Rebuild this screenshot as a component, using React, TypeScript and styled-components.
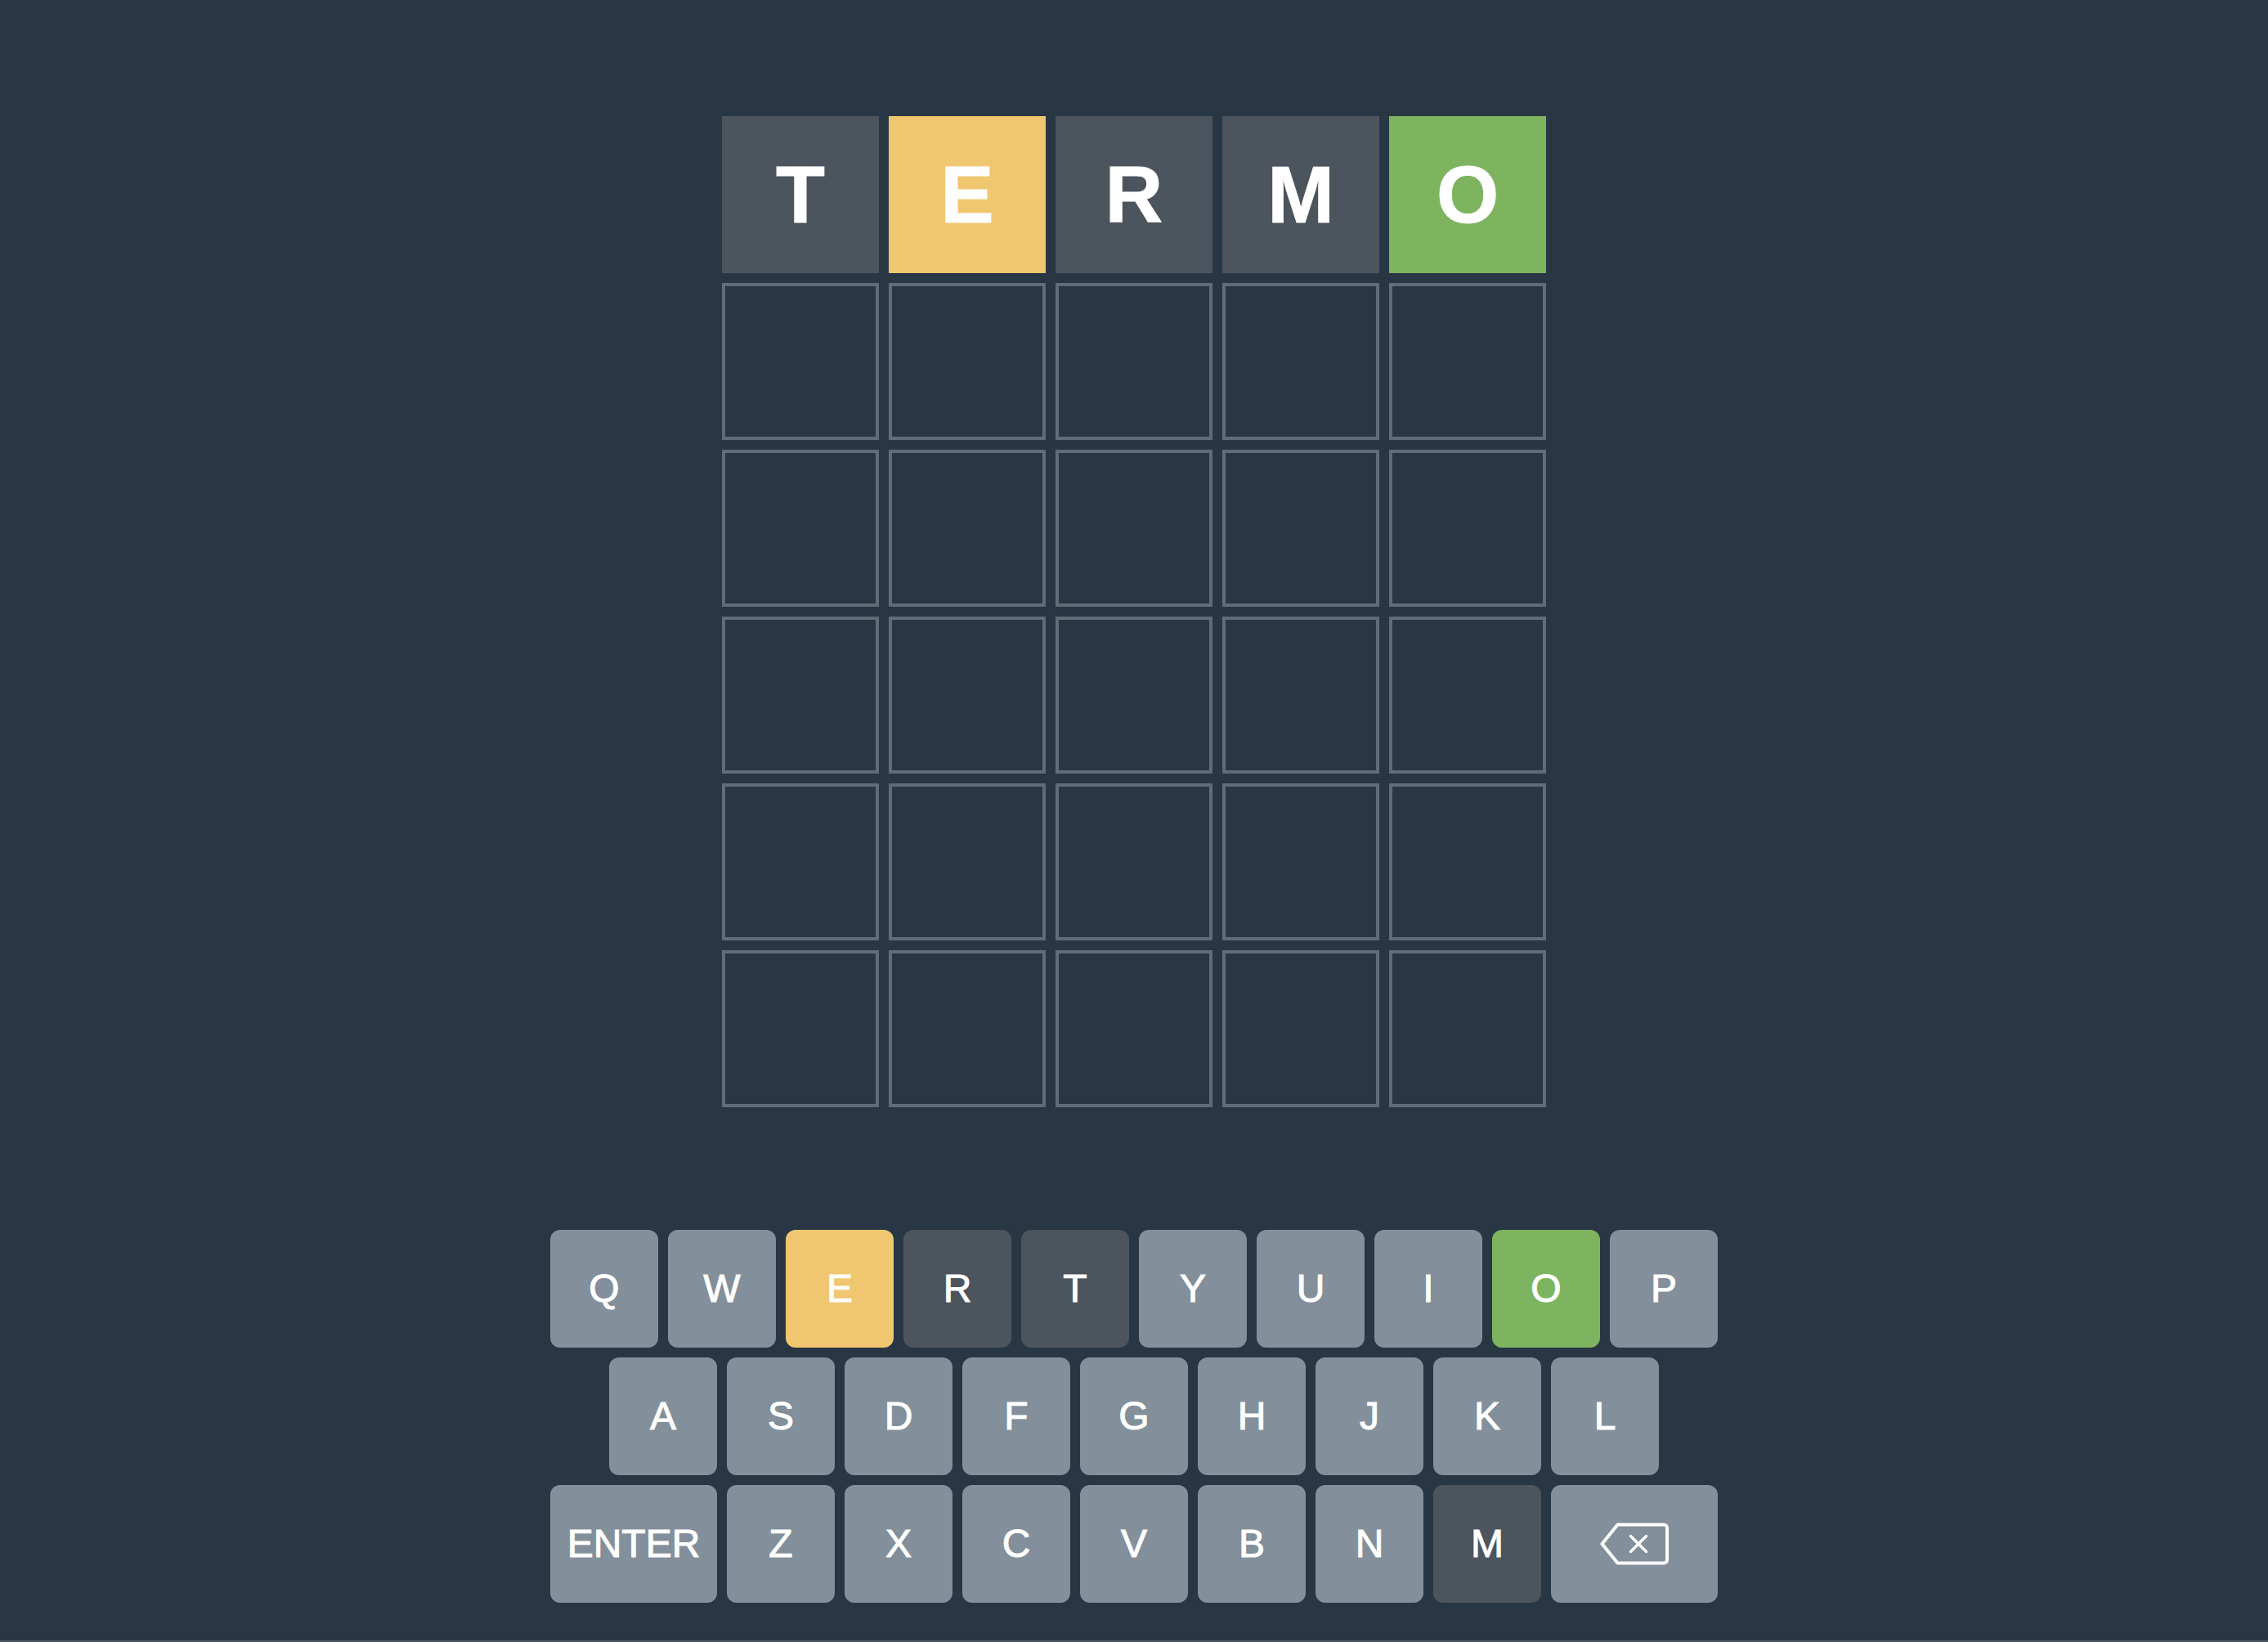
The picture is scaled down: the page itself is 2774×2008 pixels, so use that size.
import React from "react";
import styled, { createGlobalStyle } from "styled-components";

type Status = "idle" | "absent" | "present" | "correct";

const colors = {
  page: "#293643",
  outline: "#5f6d79",
  text: "#ffffff",
  idle: "#838f9a",
  absent: "#4c545e",
  present: "#f0c671",
  correct: "#7eb460",
};

const GlobalStyle = createGlobalStyle`
  *, *::before, *::after { box-sizing: border-box; }
  html, body { margin: 0; background: ${colors.page}; }
`;

const Page = styled.div`
  min-height: 100vh;
  padding: 142px 24px 46px;
  display: flex;
  flex-direction: column;
  align-items: center;
  gap: 150px;
  border-bottom: 2px solid #4f5c68;
  color: ${colors.text};
  font-family: "Liberation Sans", Arial, Helvetica, sans-serif;
`;

const Board = styled.main`
  display: grid;
  gap: 12px;
`;

const Guess = styled.div`
  display: grid;
  grid-template-columns: repeat(5, 192px);
  gap: 12px;
`;

const Tile = styled.div<{ $status: Status }>`
  height: 192px;
  display: flex;
  align-items: center;
  justify-content: center;
  border: ${(p) => (p.$status === "idle" ? `4px solid ${colors.outline}` : "none")};
  background: ${(p) => (p.$status === "idle" ? "transparent" : colors[p.$status])};
  font-size: 98px;
  font-weight: 700;
  line-height: 96px;
  -webkit-text-stroke: 1px currentColor;
`;

const Keyboard = styled.section`
  display: flex;
  flex-direction: column;
  gap: 12px;
`;

const KeyRow = styled.div`
  display: flex;
  justify-content: center;
  gap: 12px;
`;

const Key = styled.button<{ $status: Status; $wide?: boolean }>`
  width: ${(p) => (p.$wide ? "204px" : "132px")};
  height: 144px;
  padding: 0;
  display: flex;
  align-items: center;
  justify-content: center;
  border: 0;
  border-radius: 12px;
  background: ${(p) => colors[p.$status]};
  color: inherit;
  font-family: inherit;
  font-size: 48px;
  line-height: 48px;
  -webkit-text-stroke: 1px currentColor;
  cursor: pointer;
`;

const BackspaceIcon = () => (
  <svg
    width="84"
    height="52"
    viewBox="0 0 84 52"
    fill="none"
    stroke="currentColor"
    strokeWidth="4"
    strokeLinecap="round"
    strokeLinejoin="round"
    aria-hidden="true"
  >
    <path d="M2.5 26 21.5 2.5H78a4 4 0 0 1 4 4v39a4 4 0 0 1-4 4H21.5Z" />
    <path d="m37.5 16.5 19 19m0-19-19 19" strokeWidth="3.4" />
  </svg>
);

const guesses = ["TERMO", "", "", "", "", ""];
const firstGuess: Status[] = ["absent", "present", "absent", "absent", "correct"];

const keyStatus: Record<string, Status> = {
  T: "absent",
  E: "present",
  R: "absent",
  M: "absent",
  O: "correct",
};

const keyRows = [
  [..."QWERTYUIOP"],
  [..."ASDFGHJKL"],
  ["ENTER", ..."ZXCVBNM", "BACKSPACE"],
];

export default function App() {
  return (
    <>
      <GlobalStyle />
      <Page>
        <Board>
          {guesses.map((word, row) => (
            <Guess key={row}>
              {firstGuess.map((status, col) => (
                <Tile key={col} $status={word ? status : "idle"}>
                  {word[col]}
                </Tile>
              ))}
            </Guess>
          ))}
        </Board>
        <Keyboard>
          {keyRows.map((row, index) => (
            <KeyRow key={index}>
              {row.map((name) => (
                <Key
                  key={name}
                  type="button"
                  $status={keyStatus[name] ?? "idle"}
                  $wide={name.length > 1}
                  aria-label={name === "BACKSPACE" ? "Backspace" : undefined}
                >
                  {name === "BACKSPACE" ? <BackspaceIcon /> : name}
                </Key>
              ))}
            </KeyRow>
          ))}
        </Keyboard>
      </Page>
    </>
  );
}
